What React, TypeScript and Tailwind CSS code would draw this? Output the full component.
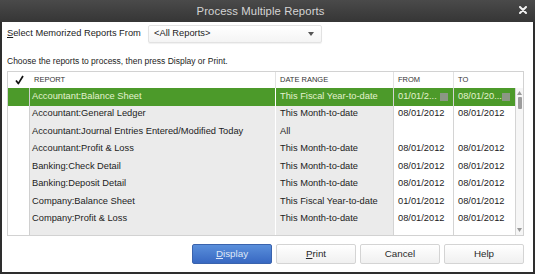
import React from 'react';

interface Row {
  report: string;
  range: string;
  from: string;
  to: string;
  selected?: boolean;
}

const rows: Row[] = [
  { report: 'Accountant:Balance Sheet', range: 'This Fiscal Year-to-date', from: '01/01/2...', to: '08/01/20...', selected: true },
  { report: 'Accountant:General Ledger', range: 'This Month-to-date', from: '08/01/2012', to: '08/01/2012' },
  { report: 'Accountant:Journal Entries Entered/Modified Today', range: 'All', from: '', to: '' },
  { report: 'Accountant:Profit & Loss', range: 'This Month-to-date', from: '08/01/2012', to: '08/01/2012' },
  { report: 'Banking:Check Detail', range: 'This Month-to-date', from: '08/01/2012', to: '08/01/2012' },
  { report: 'Banking:Deposit Detail', range: 'This Month-to-date', from: '08/01/2012', to: '08/01/2012' },
  { report: 'Company:Balance Sheet', range: 'This Fiscal Year-to-date', from: '01/01/2012', to: '08/01/2012' },
  { report: 'Company:Profit & Loss', range: 'This Month-to-date', from: '08/01/2012', to: '08/01/2012' },
];

const DateCell = ({ value, selected, width }: { value: string; selected?: boolean; width: string }) => (
  <div className={`${width} shrink-0 flex items-center justify-between pl-[4px] pr-[5px] border-r border-[#d4d4d4]`}>
    <span className="whitespace-nowrap">{value}</span>
    {selected && <span className="w-[8px] h-[8px] bg-[#8b9784]" />}
  </div>
);

const TableRow = ({ row }: { row: Row }) => {
  const sel = row.selected;
  return (
    <div className={`h-[17.5px] flex ${sel ? 'bg-[#4c9a2a] text-[#e3f2cf]' : 'text-[#1c1c1c]'}`}>
      <div className={`w-[22px] shrink-0 border-r border-[#d0d0d0] ${sel ? '' : 'bg-white'}`} />
      <div className={`w-[246px] shrink-0 flex items-center pl-[2px] border-r border-white ${sel ? '' : 'bg-[#ebebeb]'}`}>
        <span className="whitespace-nowrap">{row.report}</span>
      </div>
      <div className={`w-[118px] shrink-0 flex items-center pl-[4px] border-r border-[#d4d4d4] ${sel ? '' : 'bg-[#ebebeb]'}`}>
        <span className="whitespace-nowrap">{row.range}</span>
      </div>
      <DateCell value={row.from} selected={sel} width="w-[60px]" />
      <DateCell value={row.to} selected={sel} width="w-[62px]" />
    </div>
  );
};

const Button = ({ children, primary }: { children: React.ReactNode; primary?: boolean }) => (
  <button
    className={`w-[80px] h-[20px] rounded-[2px] border text-[9.8px] flex items-center justify-center ${
      primary
        ? 'bg-gradient-to-b from-[#5a8fdb] to-[#3868c2] border-[#3a63ad] text-[#dfe8f7]'
        : 'bg-gradient-to-b from-white to-[#f0f0f0] border-[#d4d4d4] text-[#2a2a2a]'
    }`}
  >
    {children}
  </button>
);

const App = () => {
  return (
    <div className="w-[535px] h-[274px] bg-[#2e2e2e] flex flex-col font-['Liberation_Sans',Arial,sans-serif]">
      {/* title bar */}
      <div className="h-[22px] shrink-0 relative flex items-center justify-center pr-[14px] bg-gradient-to-b from-[#4a4a4a] to-[#363636]">
        <span className="text-[11.3px] text-[#d4d4d4] tracking-[0.1px]">Process Multiple Reports</span>
        <svg className="absolute right-[8px] top-[6px]" width="8" height="8" viewBox="0 0 8 8">
          <path d="M1 1 L7 7 M7 1 L1 7" stroke="#f2f2f2" strokeWidth="2" strokeLinecap="round" />
        </svg>
      </div>

      <div className="flex-1 bg-white mx-[2px] mb-[2px] flex flex-col pl-[5px] pr-[9px] text-[9.3px] text-[#1c1c1c]">
        <div className="mt-[3px] h-[18px] flex items-center">
          <span className="w-[141px] shrink-0">
            <span className="underline">S</span>elect Memorized Reports From
          </span>
          <div className="w-[174px] h-[18px] flex items-center justify-between pl-[5px] pr-[7px] border border-[#e2e2e2] rounded-[2px] bg-gradient-to-b from-white to-[#f4f4f4] shadow-[0_1px_1px_rgba(0,0,0,0.06)]">
            <span>&lt;All Reports&gt;</span>
            <svg width="6" height="4" viewBox="0 0 6 4">
              <path d="M0 0 L6 0 L3 4 Z" fill="#555" />
            </svg>
          </div>
        </div>

        <div className="mt-[12px] h-[12px] leading-[12px] text-[8.5px]">
          Choose the reports to process, then press Display or Print.
        </div>

        {/* table */}
        <div className="mt-[4px] w-[517px] border border-[#d2d2d2] flex flex-col">
          <div className="h-[16px] flex text-[7.5px] text-[#333]">
            <div className="w-[22px] shrink-0 flex items-center justify-center">
              <svg width="9" height="10" viewBox="0 0 9 10">
                <path d="M1 5.5 L3.3 8.6 L8 1" stroke="#111" strokeWidth="1.7" fill="none" strokeLinejoin="round" />
              </svg>
            </div>
            <div className="w-[246px] shrink-0 flex items-center pl-[4px] border-r border-[#e2e2e2]">REPORT</div>
            <div className="w-[118px] shrink-0 flex items-center pl-[4px] border-r border-[#e2e2e2]">DATE RANGE</div>
            <div className="w-[60px] shrink-0 flex items-center pl-[4px] border-r border-[#e2e2e2]">FROM</div>
            <div className="w-[62px] shrink-0 flex items-center pl-[4px]">TO</div>
          </div>
          <div className="h-[147px] flex">
            <div className="flex flex-col">
              {rows.map((r) => (
                <TableRow key={r.report} row={r} />
              ))}
              <div className="flex-1 flex">
                <div className="w-[22px] shrink-0 border-r border-[#d0d0d0]" />
                <div className="w-[246px] shrink-0 bg-[#ebebeb] border-r border-white" />
                <div className="w-[118px] shrink-0 bg-[#ebebeb] border-r border-[#d4d4d4]" />
                <div className="w-[60px] shrink-0 border-r border-[#d4d4d4]" />
                <div className="w-[62px] shrink-0 border-r border-[#d4d4d4]" />
              </div>
            </div>
            {/* scrollbar */}
            <div className="flex-1 flex flex-col items-center bg-[#f6f6f6] py-[3px]">
              <svg width="5" height="4" viewBox="0 0 5 4">
                <path d="M2.5 0 L5 4 L0 4 Z" fill="#999" />
              </svg>
              <div className="mt-[2px] w-[4px] h-[12px] rounded-[1px] bg-[#9d9d9d]" />
              <div className="flex-1" />
              <svg width="5" height="4" viewBox="0 0 5 4">
                <path d="M0 0 L5 0 L2.5 4 Z" fill="#999" />
              </svg>
            </div>
          </div>
        </div>

        <div className="mt-[8px] flex justify-end gap-[4px]">
          <Button primary>
            <span><span className="underline">D</span>isplay</span>
          </Button>
          <Button>
            <span><span className="underline">P</span>rint</span>
          </Button>
          <Button>Cancel</Button>
          <Button>Help</Button>
        </div>
      </div>
    </div>
  );
};

export default App;
